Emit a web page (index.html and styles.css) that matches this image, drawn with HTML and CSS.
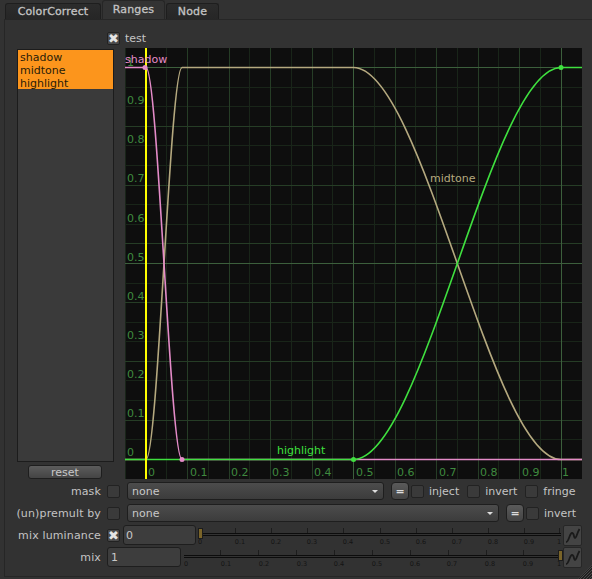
FILE: index.html
```html
<!DOCTYPE html>
<html>
<head>
<meta charset="utf-8">
<title>Ranges</title>
<link rel="stylesheet" href="styles.css">
</head>
<body>
<div class="app">
  <nav class="tabs">
    <div class="tab tab-first">ColorCorrect</div>
    <div class="tab tab-active">Ranges</div>
    <div class="tab tab-node">Node</div>
  </nav>
  <main class="panel">
    <div class="test-row">
      <span class="check checked">✖</span>
      <span class="test-label">test</span>
    </div>
    <div class="editor">
      <div class="side">
        <ul class="list">
          <li>shadow</li>
          <li>midtone</li>
          <li>highlight</li>
        </ul>
        <button class="reset">reset</button>
      </div>
      <svg class="graph" width="457" height="431" viewBox="125 48 457 431">
        <rect x="125" y="48" width="457" height="431" fill="#0e0e0e"/>
        <g class="grid-minor">
          <path d="M125 87.5H582M125 106.5H582M125 145.5H582M125 165.5H582M125 204.5H582M125 224.5H582M125 283.5H582M125 322.5H582M125 341.5H582M125 380.5H582M125 400.5H582M125 439.5H582"/>
          <path d="M125.5 48V479M166.5 48V479M208.5 48V479M249.5 48V479M291.5 48V479M332.5 48V479M374.5 48V479M415.5 48V479M457.5 48V479M498.5 48V479M540.5 48V479"/>
        </g>
        <g class="grid-mid">
          <path d="M125 126.5H582M125 185.5H582M125 243.5H582M125 302.5H582M125 361.5H582M125 420.5H582"/>
          <path d="M187.5 48V479M229.5 48V479M270.5 48V479M312.5 48V479M395.5 48V479M436.5 48V479M478.5 48V479M519.5 48V479"/>
        </g>
        <g class="grid-major">
          <path d="M125 67.5H582M125 263.5H582M353.5 48V479M561.5 48V479"/>
        </g>
        <g class="axis-labels">
          <text x="127" y="104">0.9</text>
          <text x="127" y="143">0.8</text>
          <text x="127" y="182">0.7</text>
          <text x="127" y="222">0.6</text>
          <text x="127" y="261">0.5</text>
          <text x="127" y="300">0.4</text>
          <text x="127" y="339">0.3</text>
          <text x="127" y="378">0.2</text>
          <text x="127" y="417">0.1</text>
          <text x="127" y="456">0</text>
          <text x="148" y="476">0</text>
          <text x="190" y="476">0.1</text>
          <text x="231" y="476">0.2</text>
          <text x="272" y="476">0.3</text>
          <text x="314" y="476">0.4</text>
          <text x="356" y="476">0.5</text>
          <text x="397" y="476">0.6</text>
          <text x="439" y="476">0.7</text>
          <text x="480" y="476">0.8</text>
          <text x="522" y="476">0.9</text>
          <text x="562" y="476">1</text>
          <text x="127" y="66">1</text>
        </g>
        <path class="curve tan" d="M125 459.5H146C158 459.5 170 67.5 182 67.5H353.5C423 67.5 491.7 459.5 561 459.5H582"/>
        <path class="curve pink" d="M125 67.5H146C158 67.5 170 459.5 182 459.5H582"/>
        <path class="curve green" d="M125 459.5H353.5C423 459.5 491.7 67.5 561 67.5H582"/>
        <rect x="145" y="48" width="2" height="431" fill="#ffff00"/>
        <circle cx="145" cy="67.5" r="2.5" fill="#e48bc8"/>
        <circle cx="182" cy="459.5" r="2.5" fill="#e48bc8"/>
        <circle cx="353.5" cy="459.5" r="2.5" fill="#3fe03f"/>
        <circle cx="561" cy="67.5" r="2.5" fill="#3fe03f"/>
        <text class="label-pink" x="125" y="63">shadow</text>
        <text class="label-tan" x="430" y="182">midtone</text>
        <text class="label-green" x="277" y="454">highlight</text>
      </svg>
    </div>
    <div class="row">
      <label class="row-label">mask</label>
      <span class="check"></span>
      <div class="select select-mask">none<span class="caret"></span></div>
      <button class="eq">=</button>
      <span class="check"></span>
      <span class="opt">inject</span>
      <span class="check check-gap"></span>
      <span class="opt">invert</span>
      <span class="check check-gap"></span>
      <span class="opt">fringe</span>
    </div>
    <div class="row">
      <label class="row-label">(un)premult by</label>
      <span class="check"></span>
      <div class="select select-premult">none<span class="caret"></span></div>
      <button class="eq">=</button>
      <span class="check"></span>
      <span class="opt">invert</span>
    </div>
    <div class="row row-slider">
      <label class="row-label">mix luminance</label>
      <span class="check checked">✖</span>
      <div class="number number-lum">0</div>
      <svg class="slider" width="365" height="22" viewBox="0 0 365 22">
        <path class="tick" d="M37.5 4V9M73.5 4V9M109.5 4V9M145.5 4V9M182.5 4V9M218.5 4V9M254.5 4V9M290.5 4V9M326.5 4V9M361.5 4V9"/>
        <path class="track" d="M0 9.5H363M0 11.5H363"/>
        <rect class="handle" x="0.5" y="4.5" width="4" height="10"/>
        <g class="tick-labels">
          <text x="2" y="20">0</text><text x="42" y="20">0.1</text><text x="78" y="20">0.2</text><text x="114" y="20">0.3</text><text x="150" y="20">0.4</text><text x="187" y="20">0.5</text><text x="223" y="20">0.6</text><text x="259" y="20">0.7</text><text x="295" y="20">0.8</text><text x="331" y="20">0.9</text><text x="361" y="20">1</text>
        </g>
      </svg>
      <button class="curve-btn"><svg width="17" height="19" viewBox="0 0 17 19"><path d="M2 16C5 16 5.500 7 8 7S9.500 12 11 12S13 7 15.500 3"/></svg></button>
    </div>
    <div class="row row-slider">
      <label class="row-label">mix</label>
      <div class="number number-mix">1</div>
      <svg class="slider slider-mix" width="379" height="22" viewBox="0 0 379 22">
        <path class="tick" d="M36.5 4V9M74.5 4V9M112.5 4V9M150.5 4V9M188.5 4V9M226.5 4V9M264.5 4V9M302.5 4V9M339.5 4V9"/>
        <path class="track" d="M0 9.5H376M0 11.5H376"/>
        <rect class="handle" x="374.5" y="4.5" width="4" height="10"/>
        <g class="tick-labels">
          <text x="2" y="20">0</text><text x="42" y="20">0.1</text><text x="80" y="20">0.2</text><text x="118" y="20">0.3</text><text x="155" y="20">0.4</text><text x="193" y="20">0.5</text><text x="231" y="20">0.6</text><text x="268" y="20">0.7</text><text x="306" y="20">0.8</text><text x="344" y="20">0.9</text><text x="375" y="20">1</text>
        </g>
      </svg>
      <button class="curve-btn"><svg width="17" height="19" viewBox="0 0 17 19"><path d="M2 16C5 16 5.500 7 8 7S9.500 12 11 12S13 7 15.500 3"/></svg></button>
    </div>
  </main>
  <div class="grip"></div>
</div>
</body>
</html>
```
FILE: styles.css
```css
* { box-sizing: border-box; }
html, body { margin: 0; height: 100%; }
body {
  background: #323232;
  color: #c4c4c4;
  font: 11px "DejaVu Sans", sans-serif;
  overflow: hidden;
}
.app { position: relative; width: 592px; height: 579px; }
.tabs { display: flex; height: 19px; padding-left: 5px; align-items: flex-end; }
.tab {
  height: 16px;
  border: 1px solid #1e1e1e;
  border-bottom: 0;
  border-radius: 3px 3px 0 0;
  background: linear-gradient(#2c2c2c, #262626);
  display: flex;
  align-items: center;
  justify-content: center;
  color: #c4c4c4;
  font-size: 11px;
  -webkit-text-stroke: 0.3px #c4c4c4;
  letter-spacing: 0.15px;
}
.tab-first { width: 96px; }
.tab-active {
  width: 63px;
  height: 19px;
  margin-left: 1px;
  background: #333;
  border-color: #262626;
  padding-bottom: 2px;
}
.tab-node { width: 53px; margin-left: 1px; }
.panel {
  margin-left: 4px;
  height: 558px;
  border: 1px solid #262626;
  border-right: 0;
  padding-top: 11px;
}
.test-row { display: flex; align-items: center; height: 14px; padding-left: 102px; gap: 5px; }
.check {
  width: 13px;
  height: 13px;
  flex: none;
  border: 1px solid #222;
  border-radius: 2px;
  background: #3a3a3a;
  display: inline-flex;
  align-items: center;
  justify-content: center;
  color: #e4e4e4;
  font-size: 11px;
  line-height: 1;
}
.checked { background: #4a4a4a; font-size: 13px; overflow: hidden; }
.editor { display: flex; margin-top: 3px; height: 431px; }
.side { width: 120px; padding-left: 12px; flex: none; display: flex; flex-direction: column; align-items: flex-start; }
.list {
  list-style: none;
  margin: 1px 0 0;
  padding: 0;
  width: 97px;
  height: 413px;
  background: #3a3a3a;
  border: 1px solid #1c1c1c;
}
.list li {
  background: #fc951c;
  color: #2a1c08;
  height: 13px;
  line-height: 15px;
  padding-left: 2px;
}
.reset {
  margin: 3px 0 0 11px;
  width: 74px;
  height: 14px;
  padding: 0;
  font: inherit;
  color: #c8c8c8;
  background: linear-gradient(#5c5c5c, #444);
  border: 1px solid #1e1e1e;
  border-radius: 3px;
}
.graph { display: block; flex: none; }
.grid-minor path { stroke: #192519; stroke-width: 1; fill: none; }
.grid-mid path { stroke: #263d26; stroke-width: 1; fill: none; }
.grid-major path { stroke: #3c5f3c; stroke-width: 1; fill: none; }
.axis-labels text { fill: #3f8a3f; font-size: 11px; }
.curve { fill: none; stroke-width: 1.6; }
.tan { stroke: #b5a97f; }
.pink { stroke: #e48bc8; }
.green { stroke: #3fe03f; }
.label-pink { fill: #e48bc8; font-size: 11px; }
.label-tan { fill: #b5a97f; font-size: 11px; }
.label-green { fill: #3fe03f; font-size: 11px; }
.row { display: flex; align-items: center; height: 22px; }
.editor + .row { margin-top: 1px; }
.row-label { width: 96px; flex: none; text-align: right; margin-right: 6px; letter-spacing: 0.14px; }
.select {
  height: 18px;
  margin-left: 7px;
  flex: none;
  border: 1px solid #1e1e1e;
  border-radius: 3px;
  background: linear-gradient(#4c4c4c, #3c3c3c);
  padding: 0 5px 0 4px;
  display: flex;
  align-items: center;
  justify-content: space-between;
  color: #c8c8c8;
}
.select-mask { width: 257px; }
.select-premult { width: 372px; }
.caret { width: 0; height: 0; border: 3px solid transparent; border-top: 3px solid #ddd; border-bottom: 0; }
.eq {
  width: 18px;
  height: 18px;
  margin: 0 2px 0 7px;
  padding: 0;
  font: inherit;
  font-weight: bold;
  color: #ddd;
  background: linear-gradient(#5a5a5a, #444);
  border: 1px solid #1e1e1e;
  border-radius: 4px;
}
.opt { margin-left: 5px; color: #c4c4c4; }
.check-gap { margin-left: 8px; }
.number {
  height: 20px;
  flex: none;
  border: 1px solid #1e1e1e;
  border-radius: 3px;
  background: #3d3d3d;
  display: flex;
  align-items: center;
  padding-left: 3px;
  color: #c8c8c8;
}
.number-lum { width: 73px; margin-left: 3px; padding-left: 2px; }
.number-mix { width: 74px; }
.slider { display: block; flex: none; margin-left: 2px; }
.slider-mix { margin-left: 3px; }
.tick { stroke: #1c1c1c; fill: none; }
.track { stroke: #0c0c0c; fill: none; }
.handle { fill: #7a6428; stroke: #1c1c1c; }
.tick-labels text { fill: #141414; font-size: 6.5px; text-anchor: middle; }
.curve-btn {
  width: 19px;
  height: 21px;
  flex: none;
  padding: 0;
  border: 1px solid #262626;
  background: #444;
  border-radius: 2px;
  display: flex;
  align-items: center;
  justify-content: center;
}
.curve-btn svg { display: block; flex: none; }
.curve-btn path { fill: none; stroke: #1a1a1a; stroke-width: 1.8; }
.grip {
  position: absolute;
  right: 0;
  bottom: 0;
  width: 14px;
  height: 14px;
  background: repeating-linear-gradient(135deg, #222 0 1px, #4a4a4a 1px 2px);
  clip-path: polygon(100% 0, 100% 100%, 0 100%);
}
```
